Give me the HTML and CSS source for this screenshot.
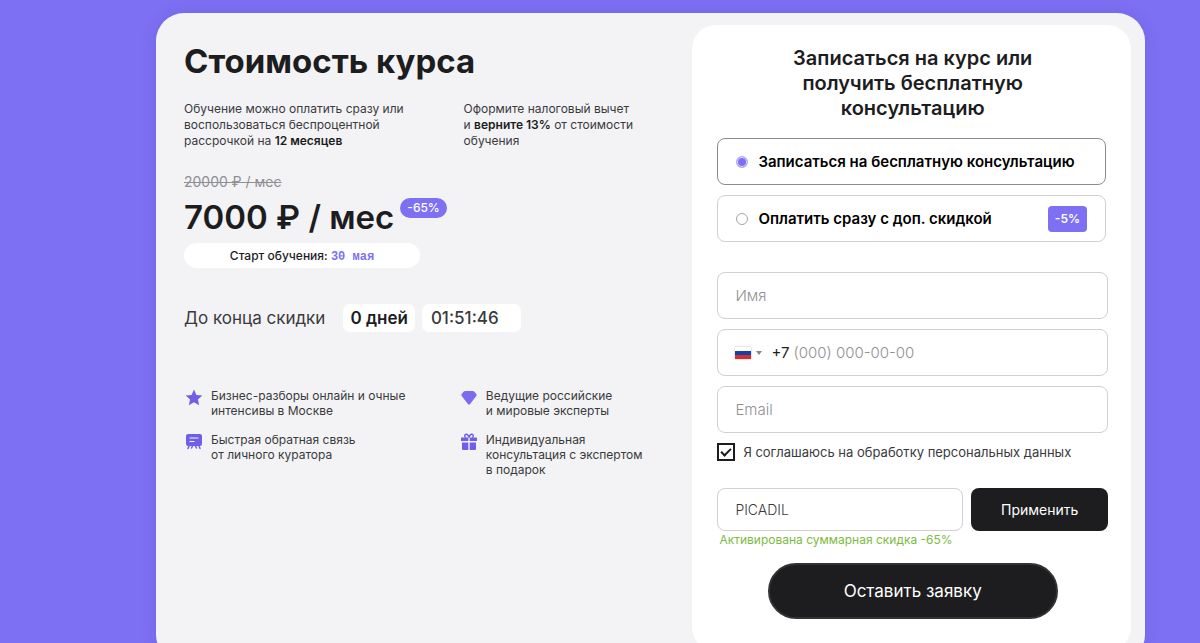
FILE: index.html
```
<!DOCTYPE html>
<html lang="ru">
<head>
  <meta charset="UTF-8">
  <meta name="viewport" content="width=device-width, initial-scale=1.0">
  <title>Стоимость курса</title>
  <link rel="stylesheet" href="styles.css">
</head>
<body>

  <main class="card">
    <section class="info">
      <h1>Стоимость курса</h1>

      <div class="columns terms">
        <p>Обучение можно оплатить сразу или<br>воспользоваться беспроцентной<br>рассрочкой на <b>12 месяцев</b></p>
        <p>Оформите налоговый вычет<br>и <b>верните 13%</b> от стоимости<br>обучения</p>
      </div>

      <s class="old-price">20000 ₽ / мес</s>
      <div class="price">
        <strong>7000 ₽ / мес</strong>
        <span class="discount">-65%</span>
      </div>
      <div class="start">Старт обучения: <span class="date">30 мая</span></div>

      <div class="timer">
        <span>До конца скидки</span>
        <span class="days">0 дней</span>
        <span class="clock">01:51:46</span>
      </div>

      <div class="columns features">
        <div class="feature">
          <svg width="18" height="18" viewBox="0 0 18 18" fill="#705ee8"><path d="M9 .5l2.400 5.400 5.900.6-4.400 3.900 1.300 5.800L9 13.200l-5.200 3 1.300-5.800L.7 6.500l5.900-.6z"/></svg>
          <p>Бизнес-разборы онлайн и очные<br>интенсивы в Москве</p>
        </div>
        <div class="feature">
          <svg width="18" height="18" viewBox="0 0 18 18" fill="#7b6bf0"><path d="M5 2h8q.7 0 1.200.5l2.100 2.500q.7.9 0 1.900L10.100 15q-1.100 1.300-2.200 0L1.700 6.900q-.7-1 0-1.900l2.100-2.500Q4.300 2 5 2z"/></svg>
          <p>Ведущие российские<br>и мировые эксперты</p>
        </div>
        <div class="feature">
          <svg width="18" height="18" viewBox="0 0 18 18" fill="none" stroke-linecap="round"><rect x="1" y="1" width="16" height="12" rx="2" fill="#705ee8"/><path d="M4 13l-1 2.500M7.500 13l-1 2M10.500 13l1 2M14 13l1 2.500" stroke="#705ee8" stroke-width="1.500"/><path d="M5 5h8M5 8.500h4" stroke="#f3f3f5" stroke-width="1.200"/></svg>
          <p>Быстрая обратная связь<br>от личного куратора</p>
        </div>
        <div class="feature">
          <svg width="18" height="18" viewBox="0 0 18 18" fill="#705ee8"><path d="M1.500 4.500h6.800V8H1V5q0-.5.500-.5zM9.700 4.500h6.800q.5 0 .5.500v3H9.700zM2 9.500h6.300V17H3q-1 0-1-1zM9.700 9.500H16V16q0 1-1 1H9.700z"/><path d="M9 4.500C8.500 2.500 7.300 1 6 1.200 4.300 1.500 4.300 4 5.800 4.500M9 4.500c.5-2 1.700-3.500 3-3.300 1.700.3 1.700 2.800.2 3.300" fill="none" stroke="#705ee8" stroke-width="1.400"/></svg>
          <p>Индивидуальная<br>консультация с экспертом<br>в подарок</p>
        </div>
      </div>
    </section>

    <form class="order">
      <h2>Записаться на курс или<br>получить бесплатную<br>консультацию</h2>

      <div class="options">
        <label class="option active">
          <input type="radio" name="type" checked>
          <span>Записаться на бесплатную консультацию</span>
        </label>
        <label class="option">
          <input type="radio" name="type">
          <span>Оплатить сразу с доп. скидкой</span>
          <span class="sale">-5%</span>
        </label>
      </div>

      <div class="fields">
        <input class="field" type="text" placeholder="Имя" aria-label="Имя">
        <div class="field phone">
          <button type="button" class="country" aria-label="Россия">
            <svg width="16" height="12" viewBox="0 0 16 12"><path fill="#fff" d="M0 0h16v4H0z"/><path fill="#1540a8" d="M0 4h16v4H0z"/><path fill="#d3302b" d="M0 8h16v4H0z"/></svg>
            <svg width="6" height="4" viewBox="0 0 6 4"><path fill="#888" d="M0 0h6L3 4z"/></svg>
          </button>
          <label for="phone">+7</label>
          <input type="tel" id="phone" placeholder="(000) 000-00-00">
        </div>
        <input class="field" type="email" placeholder="Email" aria-label="Email">
      </div>

      <label class="agree">
        <input type="checkbox" checked>
        <span>Я соглашаюсь на обработку персональных данных</span>
      </label>

      <div class="promo">
        <input class="field" type="text" value="PICADIL" aria-label="Промокод">
        <button type="button">Применить</button>
      </div>
      <p class="promo-note">Активирована суммарная скидка -65%</p>

      <button type="submit" class="submit">Оставить заявку</button>
    </form>
  </main>

</body>
</html>
```
FILE: styles.css
```
* {
  box-sizing: border-box;
}

body {
  margin: 0;
  padding: 13px 55px 0 13vw;
  background-color: #7d70f2;
  color: #1d1d1f;
  font-family: 'Inter', sans-serif;
  font-size: 12px;
}

h1, h2, p {
  margin: 0;
}

input, button {
  font-family: inherit;
}

.card {
  display: grid;
  grid-template-columns: 51fr 44fr;
  min-height: 100vh;
  padding: 12px 14px 12px 28px;
  border-radius: 28px;
  background-color: #f3f3f5;
  box-shadow: 0 0 16px rgba(60, 40, 160, 0.15);
}

/* left side */
.info {
  padding-top: 14px;
}

h1 {
  font-size: 33px;
  line-height: 44px;
  font-weight: 700;
}

.columns {
  display: grid;
  grid-template-columns: 11fr 9fr;
}

.terms {
  margin-top: 18px;
  line-height: 16px;
  color: #3a3a3d;
}

.terms b {
  font-weight: 600;
  color: #1d1d1f;
}

.old-price {
  display: block;
  margin-top: 24px;
  font-size: 14px;
  line-height: 18px;
  color: #8f8f94;
}

.price {
  display: flex;
  align-items: flex-start;
  gap: 6px;
  margin-top: 5px;
}

.price strong {
  font-size: 33px;
  line-height: 42px;
  font-weight: 600;
}

.discount {
  margin-top: 2px;
  padding: 0 7px;
  border-radius: 10px;
  background-color: #7d70f2;
  color: #fff;
  font-weight: 500;
  line-height: 20px;
}

.start {
  width: 236px;
  height: 25px;
  margin-top: 5px;
  border-radius: 13px;
  background-color: #fff;
  font-weight: 500;
  line-height: 25px;
  text-align: center;
}

.date {
  color: #7d70f2;
  font-family: 'Liberation Mono', monospace;
  font-weight: bold;
}

.timer {
  display: flex;
  align-items: center;
  margin-top: 36px;
  font-size: 17px;
  line-height: 28px;
  color: #3a3a3d;
}

.days, .clock {
  border-radius: 7px;
  background-color: #fff;
}

.days {
  margin: 0 7px 0 18px;
  padding: 0 7px;
  color: #1d1d1f;
  font-weight: 600;
}

.clock {
  padding: 0 22px 0 9px;
  font-weight: 500;
}

.features {
  grid-template-columns: 13fr 11fr;
  row-gap: 14px;
  margin-top: 56px;
  padding-left: 1px;
  line-height: 15px;
  color: #3a3a3d;
}

.feature {
  display: flex;
  gap: 8px;
}

.feature svg {
  flex: none;
  margin-top: 1px;
}

/* order form */
.order {
  padding: 21px 23px 32px 25px;
  border-radius: 24px;
  background-color: #fff;
}

h2 {
  font-size: 20px;
  line-height: 25px;
  font-weight: 600;
  text-align: center;
}

.options, .fields {
  display: grid;
  gap: 10px;
}

.options {
  margin: 17px 2px 30px 0;
}

.option {
  display: flex;
  align-items: center;
  gap: 10px;
  height: 47px;
  padding: 0 18px;
  border: 1px solid #d0d0d3;
  border-radius: 8px;
  color: #000;
  font-size: 15px;
  font-weight: 600;
}

.option.active {
  border-color: #8c8c90;
}

.option input {
  appearance: none;
  width: 12px;
  height: 12px;
  margin: 0;
  border: 1px solid #a5a5a8;
  border-radius: 50%;
}

.option input:checked {
  border-color: #b5aff0;
  background-color: #7d70f2;
  box-shadow: inset 0 0 0 1px #e0dcff;
}

.sale {
  margin-left: auto;
  padding: 0 7px;
  border-radius: 4px;
  background-color: #7d70f2;
  color: #fff;
  font-size: 12px;
  line-height: 26px;
}

.field {
  width: 100%;
  height: 47px;
  padding: 0 17px;
  border: 1px solid #d0d0d3;
  border-radius: 8px;
  outline: none;
  background-color: #fff;
  color: #3a3a3d;
  font-size: 15px;
  font-weight: 300;
}

.field::placeholder, .phone input::placeholder {
  color: #8f8f94;
  opacity: 1;
}

.phone {
  display: flex;
  align-items: center;
}

.phone label {
  margin: 0 4px 0 9px;
  color: #1d1d1f;
  font-weight: 400;
}

.phone input {
  flex: 1;
  min-width: 0;
  padding: 0;
  border: none;
  outline: none;
  font-size: 15px;
  font-weight: 300;
}

.country {
  display: flex;
  align-items: center;
  gap: 5px;
  padding: 0;
  border: none;
  background: none;
}

.country svg:first-child {
  box-shadow: 0 0 2px rgba(0, 0, 0, 0.3);
}

.agree {
  display: flex;
  align-items: center;
  gap: 8px;
  margin-top: 10px;
  color: #3a3a3d;
  font-size: 13px;
  line-height: 18px;
}

.agree input {
  appearance: none;
  display: grid;
  place-content: center;
  width: 18px;
  height: 18px;
  margin: 0;
  border: 2px solid #1d1d1f;
}

.agree input:checked::before {
  content: '';
  width: 8px;
  height: 4px;
  margin-bottom: 2px;
  border-left: 2px solid #1d1d1f;
  border-bottom: 2px solid #1d1d1f;
  transform: rotate(-45deg);
}

.promo {
  display: grid;
  grid-template-columns: 9fr 5fr;
  gap: 8px;
  margin-top: 27px;
}

.promo .field {
  height: 43px;
  font-size: 14px;
}

.promo button {
  border: none;
  border-radius: 8px;
  background-color: #1d1d1f;
  color: #fff;
  font-size: 14px;
}

.promo-note {
  margin-top: 1px;
  padding-left: 2px;
  color: #7dbb42;
  line-height: 16px;
}

.submit {
  display: block;
  width: 290px;
  height: 56px;
  margin: 15px auto 0;
  border: 2px solid #333335;
  border-radius: 28px;
  background-color: #1d1d1f;
  color: #fff;
  font-size: 17px;
}
```
